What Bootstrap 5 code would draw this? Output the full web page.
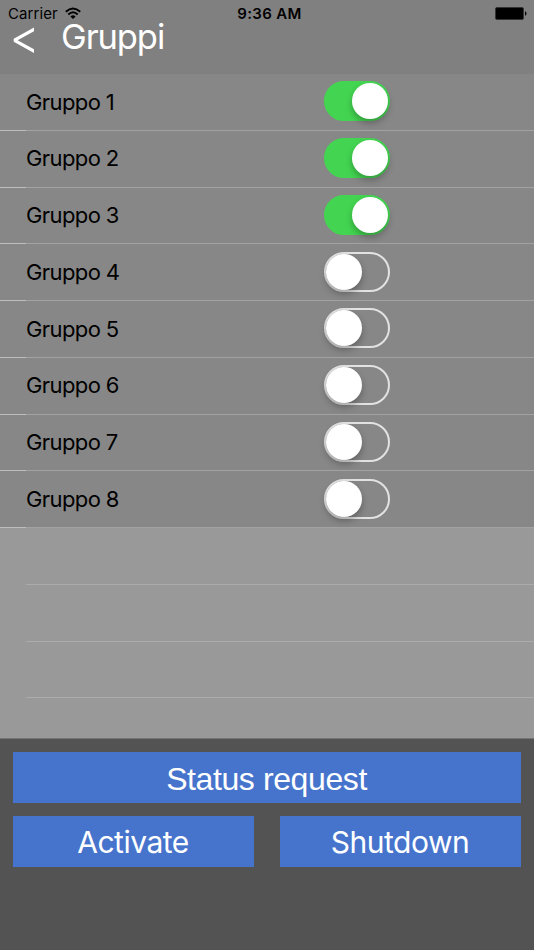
<!DOCTYPE html>
<html lang="it">
<head>
<meta charset="utf-8">
<meta name="viewport" content="width=device-width, initial-scale=1">
<title>Gruppi</title>
<link href="https://cdn.jsdelivr.net/npm/bootstrap@5.3.0/dist/css/bootstrap.min.css" rel="stylesheet">
<style>
body { background: #999; color: #000; font-family: Inter, "Liberation Sans", sans-serif; height: 950px; }
.app-header { background: #808080; height: 74px; }
.status-bar { height: 27px; font-size: 15px; line-height: 27px; padding: 0 7px 0 8px; }
.carrier { letter-spacing: .1px; }
.wifi { margin-left: 7px; }
.clock { font-weight: 600; font-size: 15px; letter-spacing: .35px; padding-left: 4px; }
.title-bar { height: 47px; margin-top: -12px; padding-left: 12px; color: #fff; }
.title-bar h1 { font-size: 34.5px; line-height: 44px; letter-spacing: -1.1px; margin: 0 0 0 25px; font-weight: 400; }
.back { margin-top: 12px; }
.group-row { height: 56.75px; background: #878787; padding: 0 144.5px 1px 26px; font-size: 22px; letter-spacing: -.6px;
  background-image: linear-gradient(to right, #bdbdbd 26px, #a2a2a2 26px); background-size: 100% 1px; background-position: bottom; background-repeat: no-repeat; }
.blank-row { height: 56.75px; margin-left: 26px; border-bottom: 1px solid #ababab; }
.group-row span { padding-top: .5px; }
.toggle { width: 66px; height: 40px; margin-bottom: .8px; border: 2px solid #e2e2e2; border-radius: 20px; }
.toggle .knob { width: 36px; height: 36px; border-radius: 50%; background: #fff; box-shadow: 0 4px 7px rgba(0,0,0,.28); }
.toggle.is-on { background: #43d551; border-color: #43d551; justify-content: flex-end; }
.app-footer { background: #535353; height: 212px; padding: 12.5px 13px; border-top: 1px solid #747474; }
.btn-block { background: #4674cc; color: #fff; border: 0; border-radius: 0; height: 51.5px; font-size: 30px; letter-spacing: -.5px; line-height: 51px; padding: 1px 1px 0 0; }
.btn-block:hover { background: #3d68bb; color: #fff; }
.wide { font-family: "Liberation Sans", sans-serif; font-size: 32px; letter-spacing: -.4px; padding-top: 2px; }
.action-pair { --bs-gutter-x: 26px; margin-top: 12.5px; }
</style>
<script src="https://cdn.jsdelivr.net/npm/bootstrap@5.3.0/dist/js/bootstrap.bundle.min.js"></script>
</head>
<body class="d-flex flex-column overflow-hidden">
<header class="app-header flex-shrink-0">
  <div class="status-bar row g-0 align-items-center">
    <div class="col d-flex align-items-center"><span class="carrier">Carrier</span>
      <svg class="wifi" width="16" height="13" viewBox="0 0 16 13"><path d="M.8 4.8Q8-1.8 15.2 4.8M3.3 7.5Q8 3.1 12.7 7.5" fill="none" stroke="#000" stroke-width="2"/><path d="M5.4 9.4Q8 7 10.6 9.4L8 12Z"/></svg>
    </div>
    <div class="col-auto clock">9:36 AM</div>
    <div class="col d-flex justify-content-end">
      <svg width="32" height="13" viewBox="0 0 32 13"><rect x=".5" y=".5" width="28" height="12" rx="1.5" fill="#000" stroke="#333"/><path d="M30 4.2Q31.5 4.5 31.5 6.5T30 8.8Z"/></svg>
    </div>
  </div>
  <div class="title-bar d-flex align-items-start">
    <svg class="back" width="24" height="27" viewBox="0 0 24 27"><path d="M22 .5V4.3L5.6 13.3L22 22.3V26.1L1.7 14.8V11.8Z" fill="#fff"/></svg>
    <h1>Gruppi</h1>
  </div>
</header>
<main class="flex-grow-1 overflow-hidden">
  <div class="group-row d-flex align-items-center justify-content-between"><span>Gruppo 1</span><div class="toggle is-on d-flex align-items-center" role="switch" aria-checked="true"><div class="knob"></div></div></div>
  <div class="group-row d-flex align-items-center justify-content-between"><span>Gruppo 2</span><div class="toggle is-on d-flex align-items-center" role="switch" aria-checked="true"><div class="knob"></div></div></div>
  <div class="group-row d-flex align-items-center justify-content-between"><span>Gruppo 3</span><div class="toggle is-on d-flex align-items-center" role="switch" aria-checked="true"><div class="knob"></div></div></div>
  <div class="group-row d-flex align-items-center justify-content-between"><span>Gruppo 4</span><div class="toggle d-flex align-items-center" role="switch" aria-checked="false"><div class="knob"></div></div></div>
  <div class="group-row d-flex align-items-center justify-content-between"><span>Gruppo 5</span><div class="toggle d-flex align-items-center" role="switch" aria-checked="false"><div class="knob"></div></div></div>
  <div class="group-row d-flex align-items-center justify-content-between"><span>Gruppo 6</span><div class="toggle d-flex align-items-center" role="switch" aria-checked="false"><div class="knob"></div></div></div>
  <div class="group-row d-flex align-items-center justify-content-between"><span>Gruppo 7</span><div class="toggle d-flex align-items-center" role="switch" aria-checked="false"><div class="knob"></div></div></div>
  <div class="group-row d-flex align-items-center justify-content-between"><span>Gruppo 8</span><div class="toggle d-flex align-items-center" role="switch" aria-checked="false"><div class="knob"></div></div></div>
  <div class="blank-row"></div>
  <div class="blank-row"></div>
  <div class="blank-row"></div>
</main>
<footer class="app-footer flex-shrink-0">
  <button class="btn btn-block wide w-100 d-block">Status request</button>
  <div class="row action-pair">
    <div class="col-6"><button class="btn btn-block w-100 d-block">Activate</button></div>
    <div class="col-6"><button class="btn btn-block w-100 d-block">Shutdown</button></div>
  </div>
</footer>
</body>
</html>
